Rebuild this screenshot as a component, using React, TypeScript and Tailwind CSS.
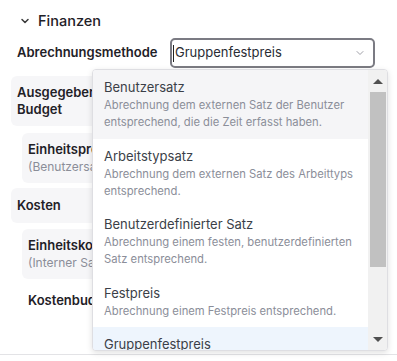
import React from 'react';
import { ChevronDown } from 'lucide-react';

type Option = { title: string; desc: string[] };

const options: Option[] = [
  {
    title: 'Benutzersatz',
    desc: ['Abrechnung dem externen Satz der Benutzer', 'entsprechend, die die Zeit erfasst haben.'],
  },
  {
    title: 'Arbeitstypsatz',
    desc: ['Abrechnung dem externen Satz des Arbeittyps', 'entsprechend.'],
  },
  {
    title: 'Benutzerdefinierter Satz',
    desc: ['Abrechnung einem festen, benutzerdefinierten', 'Satz entsprechend.'],
  },
  {
    title: 'Festpreis',
    desc: ['Abrechnung einem Festpreis entsprechend.'],
  },
  {
    title: 'Gruppenfestpreis',
    desc: [],
  },
];

const Dropdown: React.FC = () => {
  return (
    <div className="absolute left-[92px] top-[69px] w-[296px] h-[282px] bg-white border border-[#dedee2] rounded-[4px] shadow-[0_2px_6px_rgba(0,0,0,0.12)] overflow-hidden flex">
      <div className="flex-1 overflow-hidden">
        {options.map((o, i) => (
          <div
            key={o.title}
            className={
              i === 0
                ? 'bg-[#f5f5f7] pl-[11px] pr-2 pt-[8px] pb-[7.5px]'
                : i === 4
                ? 'bg-[#eef5fd] pl-[11px] pr-2 pt-[8px] h-[40px]'
                : 'pl-[11px] pr-2 pt-[8px] pb-[7.5px]'
            }
          >
            <div className="text-[13px] leading-[19px] text-[#3b3f48]">{o.title}</div>
            {o.desc.map((d) => (
              <div key={d} className="text-[11.25px] leading-[17px] text-[#8b8e99] whitespace-nowrap">
                {d}
              </div>
            ))}
          </div>
        ))}
      </div>
      <div className="w-[19px] bg-[#f1f1f1] flex flex-col items-center">
        <div className="h-[22px] flex items-center justify-center">
          <div className="w-0 h-0 border-l-[5px] border-r-[5px] border-b-[5px] border-l-transparent border-r-transparent border-b-[#505050]" />
        </div>
        <div className="w-[16px] h-[175px] bg-[#c1c1c1]" />
        <div className="flex-1" />
        <div className="h-[22px] flex items-center justify-center">
          <div className="w-0 h-0 border-l-[5px] border-r-[5px] border-t-[5px] border-l-transparent border-r-transparent border-t-[#505050]" />
        </div>
      </div>
    </div>
  );
};

export default function App() {
  return (
    <div className="relative w-[397px] h-[361px] bg-white overflow-hidden font-[Inter,sans-serif] text-[#1f2127]">
      <div className="px-[11px] pt-[10px]">
        <div className="flex items-center gap-[7px] pl-[8px]">
          <ChevronDown size={12} strokeWidth={3} className="text-[#3a3a3a]" />
          <span className="text-[14.5px] leading-[22px] font-medium">Finanzen</span>
        </div>

        <div className="flex items-center mt-[6px] h-[30px]">
          <span className="pl-[6px] w-[159px] text-[13px] font-semibold">Abrechnungsmethode</span>
          <div className="w-[205px] h-[30px] border-2 border-[#7b7b83] rounded-[5px] flex items-center pl-[1px] pr-[7px]">
            <div className="w-px h-[17px] bg-[#222]" />
            <span className="ml-[1px] flex-1 text-[13px] text-[#2a2d34]">Gruppenfestpreis</span>
            <ChevronDown size={12} strokeWidth={2} className="text-[#a0a0a8]" />
          </div>
        </div>

        <div className="mt-[8px] w-[370px] bg-[#f6f6f8] rounded-[6px] px-[6px] py-[8px]">
          <div className="w-[90px] text-[13px] leading-[17px] font-semibold">Ausgegebenes Budget</div>
        </div>

        <div className="ml-[11px] mt-[7px] w-[355px] bg-[#f6f6f8] rounded-[6px] px-[6px] py-[8px]">
          <div className="text-[13px] leading-[17px] font-semibold">Einheitspreis</div>
          <div className="text-[12px] leading-[17px] text-[#8b8e98]">(Benutzersatz)</div>
        </div>

        <div className="mt-[5px] w-[370px] bg-[#f6f6f8] rounded-[6px] px-[6px] py-[9px]">
          <div className="text-[13px] leading-[17px] font-semibold">Kosten</div>
        </div>

        <div className="ml-[11px] mt-[6px] w-[355px] bg-[#f6f6f8] rounded-[6px] px-[6px] py-[8px]">
          <div className="text-[13px] leading-[17px] font-semibold">Einheitskosten</div>
          <div className="text-[12px] leading-[17px] text-[#8b8e98]">(Interner Satz)</div>
        </div>

        <div className="ml-[17px] mt-[13px] text-[13px] leading-[17px] font-semibold">Kostenbudget</div>
      </div>

      <div className="absolute left-0 right-0 top-[354px] h-px bg-[#e3e3e6]" />

      <Dropdown />
    </div>
  );
}
